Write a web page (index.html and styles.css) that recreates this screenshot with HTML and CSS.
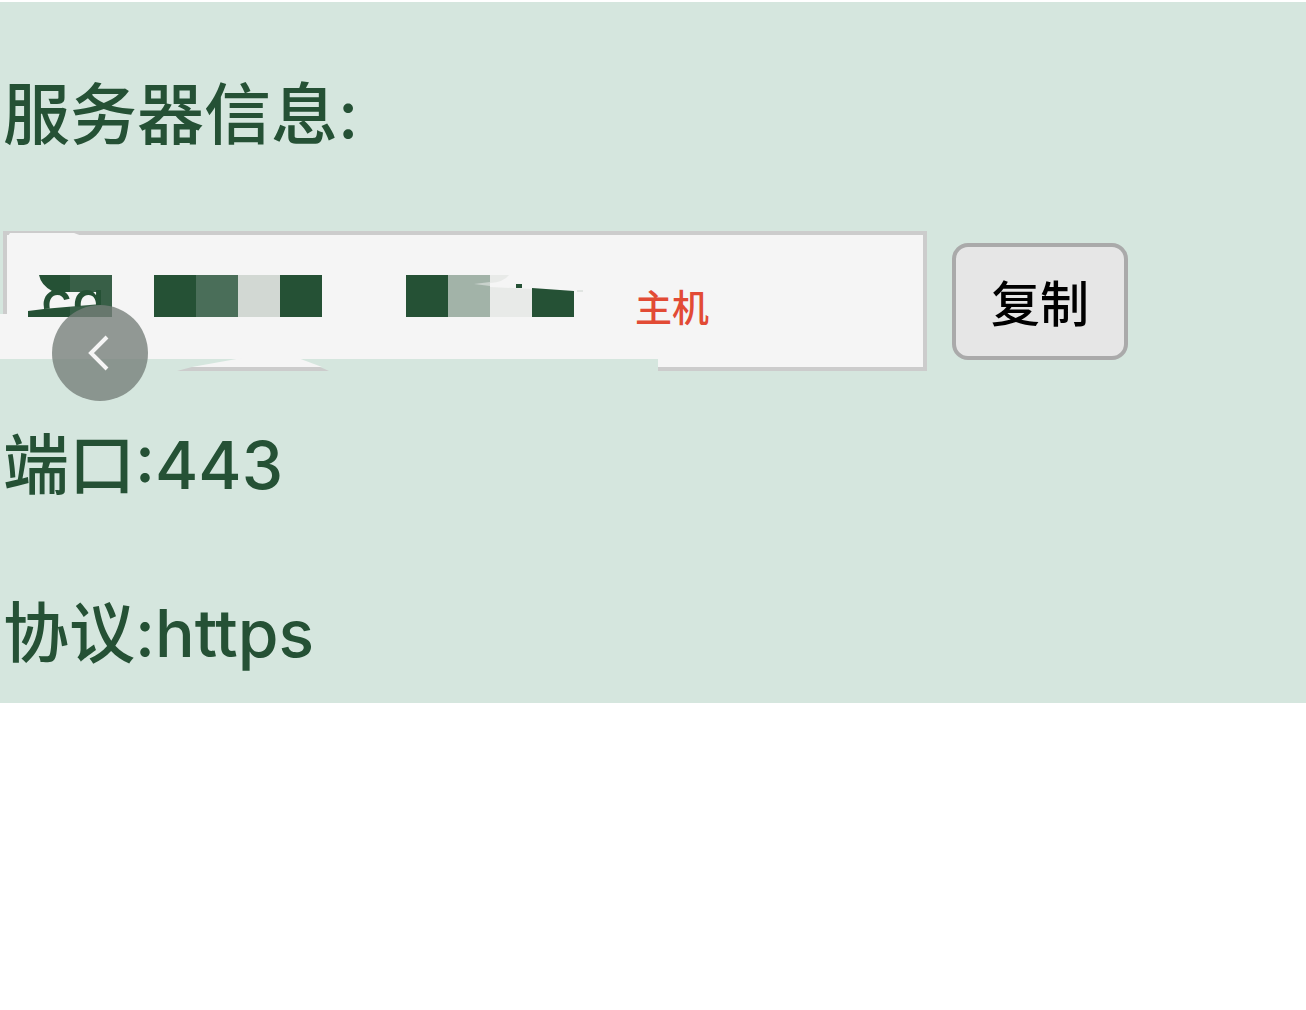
FILE: index.html
```html
<!DOCTYPE html>
<html lang="zh-CN">
<head>
  <meta charset="utf-8">
  <meta name="viewport" content="width=device-width, initial-scale=1">
  <title>服务器信息</title>
  <link rel="stylesheet" href="styles.css">
</head>
<body>
  <main class="panel">
    <label class="line title" for="host">服务器信息:</label>
    <div class="host-row">
      <input class="host" id="host" type="text" value="主机" readonly>
      <button class="copy" type="button">复制</button>
      <!-- Mosaic and brush strokes that hide the address -->
      <svg class="redaction" width="660" height="144" viewBox="0 229 660 144" aria-hidden="true">
        <defs>
          <clipPath id="scrap"><path d="M40 288H101V305L44 309Z"/></clipPath>
        </defs>
        <path fill="#d5e6de" d="M0 359H658V373H0Z"/>
        <path fill="#f5f5f5" d="M0 314H10V359H0ZM10 233H74L82 236H8Z"/>
        <path fill="#f5f5f5" d="M192 367L242 358H298L322 367Z"/>
        <path fill="#ccc" d="M192 367H320L329 371H177Z"/>
        <path fill="#255135" d="M39 275H70V317H28V311L44 309L52 291Q41 285 39 275Z"/>
        <path fill="#385f47" d="M70 275H112V317H70Z"/>
        <path fill="#f5f5f5" d="M51 292H101V304L43 309Z"/>
        <text class="remnant" x="41" y="320" clip-path="url(#scrap)">cq</text>
        <path fill="#255135" d="M154 275H196V317H154ZM280 275H322V317H280ZM406 275H448V317H406ZM532 288L574 291V317H532Z"/>
        <path fill="#4a6e59" d="M196 275H238V317H196Z"/>
        <path fill="#d2d8d3" d="M238 275H280V317H238Z"/>
        <path fill="#a2b3a8" d="M448 275H490V317H448Z"/>
        <path fill="#e8eae8" d="M490 275H509Q504 282 490 283ZM490 287L532 289V317H490Z"/>
        <path fill="#c9d2cc" d="M474 284L490 282V286Z"/>
        <path fill="#255135" d="M516 284H522V288H516Z"/>
        <path fill="#e0e4e1" d="M577 290H583V292H577Z"/>
      </svg>
      <button class="back" type="button" aria-label="上一张">
        <svg width="96" height="96" viewBox="0 0 96 96" fill="none" stroke="#f5f5f5" stroke-width="4" aria-hidden="true">
          <path d="M55 32L39 48L55 64"/>
        </svg>
      </button>
    </div>
    <p class="line port">端口:443</p>
    <p class="line protocol">协议:https</p>
  </main>
</body>
</html>
```
FILE: styles.css
```css
* {
  box-sizing: border-box;
}

body {
  margin: 0;
  background: #fff;
  color: #255135;
  font-family: Inter, "Noto Sans CJK SC", sans-serif;
}

.panel {
  margin-top: 2px;
  padding: 73px 3px 30px;
  background: #d5e6de;
}

.line {
  display: block;
  margin: 0;
  font-size: 66px;
  font-weight: 500;
  line-height: 80px;
}

.title {
  font-size: 67px;
}

.host-row {
  position: relative;
  display: flex;
  align-items: center;
  gap: 25px;
  margin: 76px 0 54px;
}

.host {
  flex: 0 1 924px;
  min-width: 0;
  height: 140px;
  padding: 10px 20px 0 628px;
  border: 4px solid #ccc;
  border-radius: 0;
  background: #f5f5f5;
  color: #e24b35;
  font: 500 37px "Noto Sans CJK SC", sans-serif;
  outline: 0;
}

.copy {
  flex: none;
  padding: 18px 35px 20px;
  border: 4px solid #aaa;
  border-radius: 16px;
  background: #e6e6e6;
  color: #000;
  font: 500 49px/71px "Noto Sans CJK SC", sans-serif;
}

.redaction {
  position: absolute;
  top: -2px;
  left: -3px;
}

.remnant {
  fill: #255135;
  font: 500 54px Inter, sans-serif;
}

.back {
  position: absolute;
  top: 74px;
  left: 49px;
  width: 96px;
  height: 96px;
  padding: 0;
  border: 0;
  border-radius: 50%;
  background: rgba(117, 125, 120, 0.78);
}

.back svg {
  display: block;
}

.protocol {
  margin-top: 88px;
}
```
